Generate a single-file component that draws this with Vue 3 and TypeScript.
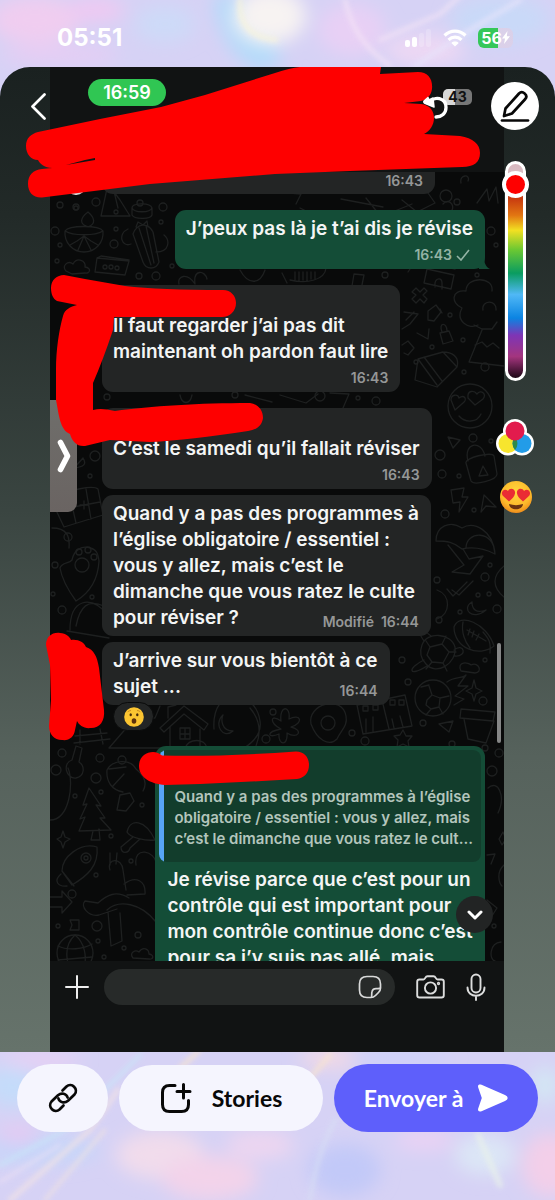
<script setup lang="ts">
import { ref } from 'vue'

interface Message {
  id: number
  side: 'in' | 'out'
  text: string
  lastLine?: string
  time: string
  edited?: boolean
  sent?: boolean
  named?: boolean
  reaction?: boolean
  quote?: string
  gap: 'wide' | 'tight' | 'far'
}

const messages: Message[] = [
  { id: 1, side: 'out', text: 'J’peux pas là je t’ai dis je révise', time: '16:43', sent: true, gap: 'wide' },
  { id: 2, side: 'in', text: 'Il faut regarder j’ai pas dit\nmaintenant oh pardon faut lire', time: '16:43', named: true, gap: 'wide' },
  { id: 3, side: 'in', text: 'C’est le samedi qu’il fallait réviser', time: '16:43', named: true, gap: 'wide' },
  {
    id: 4,
    side: 'in',
    text: 'Quand y a pas des programmes à\nl’église obligatoire / essentiel :\nvous y allez, mais c’est le\ndimanche que vous ratez le culte',
    lastLine: 'pour réviser ?',
    time: '16:44',
    edited: true,
    gap: 'tight',
  },
  { id: 5, side: 'in', text: 'J’arrive sur vous bientôt à ce', lastLine: 'sujet ...', time: '16:44', reaction: true, gap: 'tight' },
  {
    id: 6,
    side: 'out',
    text: 'Je révise parce que c’est pour un\ncontrôle qui est important pour\nmon contrôle continue donc c’est\npour sa j’y suis pas allé, mais',
    time: '',
    quote: 'Quand y a pas des programmes à l’église\nobligatoire / essentiel : vous y allez, mais\nc’est le dimanche que vous ratez le cult...',
    gap: 'far',
  },
]

const hue = ref(5)
const draft = ref('')

const dots: [number, number, number][] = [
  [60, 205, 3], [76, 208, 2], [96, 202, 4], [116, 212, 2], [140, 203, 3], [163, 207, 4], [55, 231, 4], [76, 207, 3],
  [116, 229, 2], [114, 244, 4], [60, 245, 2], [57, 261, 2], [139, 276, 3], [156, 276, 4], [172, 266, 2], [161, 222, 2],
  [491, 231, 4], [496, 245, 2], [477, 275, 2], [385, 275, 3], [450, 315, 2], [432, 347, 2], [463, 340, 2], [416, 362, 2],
  [464, 372, 2], [485, 367, 4], [107, 397, 3], [235, 395, 3], [320, 396, 5], [376, 401, 4], [358, 398, 2], [473, 438, 4],
  [491, 441, 2], [440, 455, 5], [442, 474, 4], [459, 476, 2], [90, 476, 2], [95, 456, 5], [445, 514, 4], [474, 510, 2],
  [68, 537, 4], [55, 565, 3], [92, 597, 2], [62, 610, 4], [53, 594, 2], [485, 577, 4], [490, 565, 2], [437, 580, 3],
  [478, 595, 2], [489, 594, 2], [497, 609, 4], [460, 612, 2], [439, 620, 3], [402, 660, 3], [408, 682, 3], [485, 660, 2],
  [483, 701, 4], [423, 723, 3], [352, 733, 3], [365, 741, 4], [273, 712, 3], [266, 739, 4], [452, 744, 3], [485, 748, 3],
  [499, 753, 4], [492, 771, 5], [62, 753, 4], [100, 758, 4], [122, 760, 4], [56, 770, 5], [96, 778, 5], [101, 792, 2],
  [142, 805, 2], [75, 796, 2], [111, 836, 2], [131, 861, 2], [96, 875, 2], [72, 894, 4], [97, 926, 5], [58, 926, 2],
  [98, 941, 2], [138, 935, 3], [124, 948, 2], [104, 957, 2], [494, 926, 2], [470, 217, 3], [457, 202, 3], [446, 196, 6],
]
</script>

<template>
  <main class="page">
    <svg class="holo" viewBox="0 0 555 1200" preserveAspectRatio="none" aria-hidden="true">
      <defs>
        <filter id="soft" x="-50%" y="-50%" width="200%" height="200%"><feGaussianBlur stdDeviation="9" /></filter>
        <filter id="streak" x="-50%" y="-50%" width="200%" height="200%"><feGaussianBlur stdDeviation="2.500" /></filter>
      </defs>
      <g filter="url(#soft)">
        <ellipse cx="35" cy="20" rx="45" ry="24" fill="#f0cdf0" />
        <ellipse cx="95" cy="10" rx="30" ry="12" fill="#efc9f2" />
        <ellipse cx="60" cy="55" rx="60" ry="10" fill="#e6cdf4" />
        <ellipse cx="165" cy="24" rx="30" ry="18" fill="#cddaf8" />
        <path d="M214-5C216 30 232 60 262 72L285 60 240-5Z" fill="#b2dbfa" />
        <ellipse cx="270" cy="16" rx="36" ry="28" fill="#f7f3f2" />
        <ellipse cx="352" cy="30" rx="34" ry="26" fill="#e8d0f5" />
        <ellipse cx="425" cy="50" rx="40" ry="16" fill="#edd8f4" />
        <ellipse cx="500" cy="20" rx="50" ry="24" fill="#c9d9f8" />
        <ellipse cx="12" cy="1085" rx="26" ry="22" fill="#c4dcfa" />
        <ellipse cx="40" cy="1060" rx="40" ry="10" fill="#e6d0f4" />
        <ellipse cx="40" cy="1150" rx="60" ry="14" fill="#c6d6f9" />
        <ellipse cx="18" cy="1135" rx="20" ry="8" fill="#e8c8f2" />
        <ellipse cx="160" cy="1155" rx="44" ry="24" fill="#f1dcec" />
        <ellipse cx="210" cy="1178" rx="48" ry="22" fill="#f3d3ea" />
        <ellipse cx="260" cy="1145" rx="34" ry="14" fill="#edd6f0" />
        <ellipse cx="345" cy="1170" rx="36" ry="26" fill="#c2c9f8" />
        <ellipse cx="425" cy="1140" rx="30" ry="10" fill="#ebd2f4" />
        <ellipse cx="485" cy="1155" rx="30" ry="20" fill="#dce6f6" />
        <ellipse cx="550" cy="1165" rx="28" ry="32" fill="#f3cfe9" />
        <ellipse cx="330" cy="1058" rx="30" ry="10" fill="#f3d9e4" />
        <ellipse cx="400" cy="1058" rx="50" ry="9" fill="#cdd2f9" />
        <ellipse cx="545" cy="1085" rx="14" ry="18" fill="#d3e7f4" />
      </g>
      <g fill="none" stroke-linecap="round" filter="url(#streak)" opacity=".7">
        <path d="M0 1165 65 1130 140 1055" stroke="#c8e6f8" stroke-width="4" />
        <path d="M10 1200 90 1130 118 1090" stroke="#f3e3e4" stroke-width="5" />
        <path d="M45 1200 105 1130" stroke="#f6e6dc" stroke-width="3" />
        <path d="M0 1182 60 1145" stroke="#efe2f4" stroke-width="3" />
        <path d="M180 1068 198 1052M310 1078 330 1055" stroke="#f9e5cf" stroke-width="5" />
        <path d="M310 1200C316 1160 325 1140 335 1120" stroke="#d8dff4" stroke-width="4" />
        <path d="M500 1185 478 1135" stroke="#e9f2ea" stroke-width="6" />
        <path d="M345 0C352 30 365 48 390 66M380 40 440 14 460-4" stroke="#f6e6f6" stroke-width="4" />
        <path d="M415 66 470 30 520 0" stroke="#e7e4fb" stroke-width="5" />
        <path d="M240 0C238 25 252 38 276 40" stroke="#fbf5d8" stroke-width="5" />
      </g>
    </svg>

    <header class="status">
      <span class="clock">05:51</span>
      <span class="indicators">
        <svg class="signal" viewBox="0 0 28 20" aria-label="Réseau">
          <rect x="1" y="12" width="5" height="7" rx="2" fill="#fff" />
          <rect x="8" y="9" width="5" height="10" rx="2" fill="#fff" />
          <rect x="15" y="5" width="5" height="14" rx="2" fill="#fff" opacity=".2" />
          <rect x="22" y="1" width="5" height="18" rx="2" fill="#fff" opacity=".2" />
        </svg>
        <svg class="wifi" viewBox="0 0 24 18" aria-label="Wi-Fi">
          <g fill="none" stroke="#fff" stroke-width="3.200">
            <path d="M1.500 6.500C7.500.6 16.500.6 22.500 6.500" />
            <path d="M5.500 10.800C9.300 7.200 14.700 7.200 18.500 10.800" />
          </g>
          <path d="M12 17.600 8.300 13.900C10.200 12.100 13.800 12.100 15.700 13.900Z" fill="#fff" />
        </svg>
        <span class="battery">
          <b>56</b>
          <svg viewBox="0 0 8 13"><path d="M5.500 0 0 7.500h3L2 13 8 5.200H4.800Z" fill="#fff" /></svg>
        </span>
      </span>
    </header>

    <section class="editor">
      <div class="shot">
        <div class="shot-head">
          <span class="pill">16:59</span>
          <span class="old-battery">43</span>
        </div>

        <div class="chat">
          <svg class="doodles" viewBox="50 172 454 789" preserveAspectRatio="xMinYMin slice" aria-hidden="true">
            <g fill="none" stroke="#1e2020" stroke-width="1.300" stroke-linejoin="round" stroke-linecap="round">
              <circle v-for="(d, i) in dots" :key="i" :cx="d[0]" :cy="d[1]" :r="d[2]" />
              <path d="M101 216 108 184 120 200 130 216ZM112 183l6 25M132 208c0-5 18-6 20 0v7c-2 5-18 4-20 0Zm0 0c2 5 18 5 20 0" />
              <path d="M65 231c4-6 34-6 38 0 1 12-8 21-19 21S64 243 65 231Zm0 0c8 5 30 5 38 0M88 227c-9-3-8-9 0-15 7 6 8 12 0 15ZM70 245l7-4 7-5 7 5 7 4M78 250l6-14 7 14" />
              <path d="M133 234c4-11 15-12 20-2l6 30c-3 8-13 8-16 0ZM139 228l12 37M146 226l8 37M131 244c-9 4-14-10-3-15M156 252c14 0 14-12 8-17M136 227l2-5 5 3 4-4 1 6" />
              <path d="M66 271c-5-5 2-11 7-7 4-7 13-4 12 3 7 1 5 7 0 6l-13 1ZM97 258l32 3-4 14-30-3ZM97 258l4-2 28 4" />
              <circle cx="105" cy="267" r="2" /><circle cx="111" cy="267" r="2" /><circle cx="117" cy="268" r="2" />
              <path d="M195 284c-8-12-18-8-16 0m16 0c-2-15 10-14 12-5M240 270c8 15 20 15 25 0M282 273l5 10M290 280c17 4 35 0 36-12M295 272v8m4-8v9m4-9v8m4-8v9m4-9v7m4-7v7M352 286l2-12 10 1-2 10M408 272l4-6M424 283l3-14 27 6-3 14Zm7-15 2-4 22 5M442 289v-6c0-6-6-5-7 0v4" />
              <path d="m412 292 4-4 4 4 4-4 3 3-4 4 4 4-3 4-4-4-4 4-4-4 4-4ZM404 312l14 2-8 10-8 5M406 320l8-8M428 311l8-6 5 7-7 9-6-1ZM442 313l-2-4M417 333l11 6 1-10M402 345l6-4 6 7-6 7-4-2M440 333l9-2 4 10-10 3ZM442 332c-4-10 5-10 5-1" />
              <path d="M462 308c-12-5-10-19 4-17 0-15 28-15 26 0M462 308c-7 13 7 22 16 17M474 325l8 4h10l5-7M483 310c-2-10 14-11 13 0M482 330l-13 32 35 4M475 345l7-3 5 5 6-4 6 5" />
              <path d="m415 380 3-21 25-7 14 15-20 20-22-7Zm3-21 19 26M424 357l18 24M443 352c8 0 17 4 14 15M300 208l16 8M266 191l35 3-5 10M341 199l42 8M366 198l12 15M402 200l15 12 18-9-7-10M412 204l-27 11M477 203l10-14 2 12 7-14 2 16M443 204c7-8 15 5 5 10M461 183c-2-9 10-9 7-2" />
              <circle cx="470" cy="406" r="22" />
              <path d="M451 400c0-6 7-6 8-2 5-4 9 1 4 5l-8 7ZM468 398c-1-8 6-8 9-4 4-5 10 0 6 5l-8 6ZM459 416c6 7 18 7 22-2M448 437l12 3-7 8Zm20 24c-5-18 13-22 17-5" />
              <path d="M466 463c-2-5 26-12 28-7l3 18c0 6-23 12-26 7ZM479 476l4-10 5 9ZM451 490l13-2-2 9 6 0-9 15 1-10-7 1ZM484 495l12 12-10-1-5 6Z" />
              <path d="M62 496c5-6 31-11 36-7l5 26-39 12-9-19ZM58 510l42-8M69 492l7 31M86 489l5 30M52 528c15 0 18 8 17 20M80 505h8m-4-4v8M83 458l-9 10c10-1 13-4 9-10M90 548c-8-3-16 2-18 12-3 4-10 2-12 8 2 12 8 22 16 33 15-9 22-22 23-40-1-8-3-12-9-13Z" />
              <circle cx="82" cy="565" r="7" /><circle cx="79" cy="552" r="3" /><circle cx="88" cy="550" r="3" /><circle cx="94" cy="557" r="3" />
              <path d="M70 630c0-31 20-36 38-15M67 631l42 7M76 626c4-20 12-27 28-20M245 395l27 7M330 393l19 1-6 14M180 395c2 10 10 10 12 0M280 395l26 8 12-9" />
              <path d="M436 541c0-15 14-21 26-13 12-7 31 2 33 26-12-6-24-7-33-5-8-7-15-8-26-8ZM466 548c0-17 28-19 29 6M448 545l16 20-12 7 18 2 13-18-14 3-6-10M447 589l6 7 14-14m-15 8 7 5 14-14M472 602c-11 6 0 20 14 8-10 4-14-1-14-8M504 566c-12 10-12 21 0 31M437 590c14 5 14 24 0 29" />
              <path d="M454 627c5-15 33-4 40 19-15 12-40 2-40-19ZM463 622c-2 10 2 20 7 26M483 632c6 7 8 10 7 21M467 630l19 11M470 629l-2 6m6-4-2 6m7-3-3 6" />
              <path d="M422 645c5-14 29-12 33 2 2 17-19 29-29 17-5-5-7-11-4-19Zm8 2 12-3 7 8-6 11-11-1-5-7ZM430 647l-4-6m16 3 4-8m3 16 7 0m-13 11 4 8m-15-9-6 7M424 641c-9-13-3-13 7-5M454 650c10-8 14 7 1 6M424 660c-17 8-16 18 3 6" />
              <circle cx="433" cy="698" r="18" />
              <path d="m427 700 5-5 8 3-1 9-8 2-5-4ZM432 695l-3-9m11 12 9-2m-10 11 4 7m-12-5-5 6M421 687l8-2M447 682c8-6 15-3 19-7l-8 11h10l-13 10 9 3-10 6M466 691l6-3 2-8 2 8 6 3-6 3-2 7-2-7ZM461 671c-5-10 8-9 10-6 8-4 12 8 4 8ZM461 709l34 3-2 9-33-3ZM464 719l4 20 18 4 8-22M439 724l14-3-4 11Z" />
              <path d="m357 705 48-10 7 31-49 8ZM382 700l7 29M363 706h5v5h-5Zm10-1h5v5h-5Zm-7 14v13m7-15v14M390 700h5v5h-5Zm9 0h5v5h-5ZM392 719l2 9m6-12 3 11M311 724c-4-20 31-30 35-8 2 10-5 14-9 23-8 8-20 1-26-15ZM403 730l3 6 6 0-4 5 1 6-6-3-6 3 1-7-4-4 6-1Z" /><circle cx="328" cy="723" r="7" />
              <path d="M160 728l24-22 24 18-4 6-20-16-20 18ZM170 727v22h30v-20M180 728h10v11h-10Zm5 0v11m-5-5h10M168 718v-11l8-2M109 748l26-30 20 0 5-12M109 748h76c4-10 20-10 22 0M214 729c-3-45 42-40 46-8 2 14-8 22-16 27M223 715c-10 9 0 25 10 16-12 0-12-12-10-16M250 708c12 14 10 28 6 38" />
              <path d="M281 729c-12-6-11-16 0-8-2-16 10-16 8-2 12-6 15 4 2 8 13 3 7 13-4 6 1 14-9 12-8 1-11 5-14-2 2-5ZM75 736l32-3M74 743l36-4M80 730v14m20-15 3 15" />
              <path d="M76 746l6 2-3 14c6 4 6 14-3 16-10 1-14-15-4-18ZM107 770c5-10 23-12 29-1 10 8 11 15 7 22M107 770c-1 12 5 20 16 22M113 786l11-12m-15-5 17-2M120 795l10-2 4 8-8 10-9-1ZM50 820c20 0 24-38 18-52" />
              <path d="M89 788l12 18-5-1 9 13-5 0 11 12-32 1 6-14-5 2 7-15-4 1ZM93 831l-2 9 9 0-1-11M57 839l4-2 2-6 2 6 5 2-5 3-2 6-2-6ZM127 832c3-14 18-13 28 8-9 1-25-2-28-8ZM133 837l-12 10c0 8 8 6 9 1l10-9" />
              <path d="M62 871c0-14 18-29 35-24 2 19-10 29-25 38ZM62 871l12 15M61 874c-8 7-3 13 6 12" /><circle cx="86" cy="858" r="5" /><circle cx="86" cy="858" r="2" />
              <path d="M136 865c-3-20 20-14 20-1M110 870c-4-12 12-13 13 0l3 20M124 884c12-9 22-3 21 10l-18 1M110 865v-12m6 11 1-11M129 898c-13-8-22-3-31 5l-13-2c-5 5 3 16 14 14l18-6M107 910c12-11 34-7 49 12M108 912l3 34 11-5-2-28M50 897h12v-6l10 11-10 11v-6H50" />
              <path d="M70 920h9v10h-9l2-5ZM133 958c-4-5 2-9 6-6 4-6 10-3 10 2 6 1 4 6 0 5Z" /><circle cx="75" cy="953" r="18" /><path d="M58 946c10 5 26 3 34-2M58 960l34-3M75 935c-11 10-9 24-5 35M75 935c10 8 12 22 9 33M488 788c10-9 18 8 10 25M499 839l4-7 3 7-4 6ZM487 855l8-1-4 10M504 865c-8 7-5 18-2 21M487 900l10 8-7 11M501 942c-12 1-12 18-6 19" />
            </g>
          </svg>

          <span class="avatar-edge"></span>

          <div class="thread">
            <article class="bubble in cut-off"><span class="meta">16:43</span></article>
            <article
              v-for="m in messages"
              :key="m.id"
              class="bubble"
              :class="[m.side, m.gap, { named: m.named, quoting: m.quote }]"
            >
              <blockquote v-if="m.quote">{{ m.quote }}</blockquote>
              <p>{{ m.text }}</p>
              <div v-if="m.time" class="closing">
                <p v-if="m.lastLine">{{ m.lastLine }}</p>
                <span class="meta">
                  <span v-if="m.edited">Modifié</span>
                  <time>{{ m.time }}</time>
                  <svg v-if="m.sent" class="check" viewBox="0 0 14 12"><path d="m1 7 4 4 8-10" fill="none" stroke="currentColor" stroke-width="1.600" /></svg>
                </span>
              </div>
              <svg v-if="m.sent" class="tail" viewBox="0 0 12 12"><path d="M0 0c0 0 4 0 5 0 0 6 2 10 6 12H0Z" fill="#144d37" /></svg>
              <span v-if="m.reaction" class="reaction">
                <svg viewBox="0 0 20 20" aria-label="Surpris">
                  <circle cx="10" cy="10" r="9.800" fill="#fcc531" />
                  <path d="M3.500 5.200C4.500 3.900 5.800 3.500 7 3.600M16.500 5.200C15.500 3.900 14.200 3.500 13 3.600" stroke="#c98a20" fill="none" />
                  <ellipse cx="6.700" cy="7.800" rx="1.200" ry="1.500" fill="#472a0b" />
                  <ellipse cx="13.300" cy="7.800" rx="1.200" ry="1.500" fill="#472a0b" />
                  <ellipse cx="10" cy="14" rx="2.300" ry="2.800" fill="#5d310b" />
                </svg>
              </span>
            </article>
          </div>

          <button class="side-tab" aria-label="Ouvrir">
            <svg viewBox="0 0 14 34"><path d="M3.500 3.500 10.500 17 3.500 30.500" fill="none" stroke="#fff" stroke-width="5.600" stroke-linecap="round" stroke-linejoin="round" /></svg>
          </button>
          <span class="scrollbar"></span>
          <button class="jump" aria-label="Aller en bas">
            <svg viewBox="0 0 16 10"><path d="m2 2 6 6 6-6" fill="none" stroke="#fff" stroke-width="3" stroke-linecap="round" stroke-linejoin="round" /></svg>
          </button>
        </div>

        <div class="composer">
          <button aria-label="Ajouter">
            <svg width="24" height="24" viewBox="0 0 24 24"><path d="M12 1v22M1 12h22" stroke="#eee" stroke-width="2" stroke-linecap="round" /></svg>
          </button>
          <label class="field">
            <input v-model="draft" type="text" aria-label="Message" />
            <svg width="24" height="24" viewBox="0 0 24 24" fill="none" stroke="#d8d9d9" stroke-width="1.700" stroke-linejoin="round">
              <path d="M13 22.500H9c-5 0-7.500-2.500-7.500-7.500V9C1.500 4 4 1.500 9 1.500h6C20 1.500 22.500 4 22.500 9v4c0 2-1 3.500-2 4.500l-3 3c-1 1-2.500 2-4.500 2Z" />
              <path d="M13.500 22c.5-2 0-4 .5-5.500.6-2 2-2.800 4-2.800 1.800 0 3 0 4-.7" />
            </svg>
          </label>
          <button class="camera" aria-label="Appareil photo">
            <svg width="29" height="24" viewBox="0 0 29 24" fill="none" stroke="#dcdddd" stroke-width="1.900" stroke-linejoin="round">
              <path d="M3.500 4.500h4c1 0 1.300-.6 1.800-1.600.6-1.200 1-1.700 2.200-1.700h6c1.200 0 1.600.5 2.200 1.700.5 1 .8 1.600 1.800 1.600h4c1.500 0 2.300.8 2.300 2.300v13.400c0 1.500-.8 2.300-2.300 2.300h-22C2 22.500 1.200 21.700 1.200 20.200V6.800C1.200 5.300 2 4.500 3.500 4.500Z" />
              <circle cx="14.500" cy="13" r="5.600" />
              <circle cx="22.500" cy="8.500" r=".7" />
            </svg>
          </button>
          <button aria-label="Message vocal">
            <svg width="20" height="28" viewBox="0 0 20 28" fill="none" stroke="#dcdddd" stroke-width="1.900" stroke-linecap="round">
              <rect x="5.500" y="1.500" width="9" height="18" rx="4.500" />
              <path d="M1.500 14.500c0 11 17 11 17 0M10 23v4" />
            </svg>
          </button>
        </div>
      </div>

      <svg class="ink" viewBox="0 67 555 985" aria-hidden="true">
        <g fill="#fe0000">
          <path fill-rule="evenodd" d="M26 146C26 138 31 134 38 132L100 119 161 107 205 95 275 73Q290 68 300 67H381L380 74 418 72C428 72 433 79 432 89 431 95 428 99 421 101L404 103 421 104C430 105 434 111 434 118 434 125 430 131 424 134L460 136C473 138 480 144 480 153 480 162 474 167 462 167L350 171 275 174 150 184 42 197.500C33 198 28 192 28 184 28 175 33 170 42 169L52 168C45 168 40 164 38 160 31 160 26 154 26 146ZM66 165 95 160 95 158 85 160Z" />
          <path d="M51 288C51 280 57 275 64 275L85 279 125 286Q160 290 223 290C231 290 236 296 236 303 236 311 230 317 222 317H114L113 330Q103 360 93 383L93 410C100 408 106 409 115 411 150 406 200 403 250 403 258 404 263 410 263 418 262 426 256 430 248 431Q190 440 150 442L110 440 85 446C77 447 72 441 70 434 60 430 59 415 56 400L56 370C56 350 59 330 63 316 65 309 70 307 77 305L57 301C53 299 51 294 51 288Z" />
          <path d="M46 645C46 637 52 632 60 633 66 633 70 637 71 640 78 639 84 642 86 647 94 650 97 656 99 668L104 710C105 721 100 728 91 728 84 729 79 725 77 721L75 730C74 737 69 741 62 740 54 740 49 734 49 726L51 700 50 665Z" />
          <path d="M139 766C139 757 146 752 153 752Q158 752 162 755.500 220 757 296 751.500C304 751.500 309 757 309 765 309 773 304 778 297 779L262 781 200 784 165 785C150 784 139 777 139 766Z" />
        </g>
      </svg>

      <button class="back" aria-label="Retour">
        <svg width="16" height="28" viewBox="0 0 16 28"><path d="M14.500 2.500 2.500 14.500 14.500 26.500" fill="none" stroke="#fff" stroke-width="2.700" stroke-linecap="round" stroke-linejoin="round" /></svg>
      </button>
      <button class="undo" aria-label="Annuler">
        <svg width="28" height="28" viewBox="0 0 28 28">
          <path d="M8 9.500C12 2.500 24 4.500 24 14.500c0 6-4.500 9.500-10 9.500" fill="none" stroke="#fff" stroke-width="3.300" stroke-linecap="round" />
          <path d="M6 4.500 2.300 7.800c-1 1-.4 2 .6 2.600L12 14l-1-9-4 2Z" fill="#fff" stroke="#fff" stroke-width="1.500" stroke-linejoin="round" />
        </svg>
      </button>
      <aside class="tools">
        <button class="pen" aria-label="Dessiner">
          <svg width="30" height="32" viewBox="0 0 30 32" fill="none" stroke="#080808" stroke-width="2.700" stroke-linecap="round" stroke-linejoin="round">
            <path d="M4 26 5.500 18.500 19 3.500c3.500-3.500 9.500 1.500 6.300 5.500L12 23.500Z" />
            <path d="M2 30.500h26" />
          </svg>
        </button>
        <div class="hues">
          <input v-model="hue" type="range" min="0" max="100" aria-label="Couleur" />
        </div>
        <button class="palette" aria-label="Palette">
          <svg width="38" height="37" viewBox="0 0 38 37">
            <g fill="#fff"><circle cx="19" cy="12" r="12" /><circle cx="12" cy="24.500" r="12" /><circle cx="26" cy="24.500" r="12" /></g>
            <circle cx="12" cy="24.500" r="9.500" fill="#f7e52e" />
            <circle cx="26" cy="24.500" r="9.500" fill="#229ce8" />
            <path d="M19 18.100a9.500 9.500 0 0 1 0 12.800 9.500 9.500 0 0 1 0-12.800Z" fill="#2f8a49" />
            <circle cx="19" cy="12" r="9.500" fill="#e21b4d" />
          </svg>
        </button>
        <button class="emoji" aria-label="Émojis">
          <svg width="34" height="34" viewBox="0 0 34 34">
            <defs><radialGradient id="face" cx=".5" cy=".35" r=".65"><stop offset="0" stop-color="#ffd83d" /><stop offset=".7" stop-color="#fdb92b" /><stop offset="1" stop-color="#ee8c1c" /></radialGradient></defs>
            <circle cx="17" cy="17" r="16" fill="url(#face)" />
            <path d="M10 21.500 3.800 15.800C1 12 5.500 7.500 9 11c1.500-4 8-2.500 7 2.500-.5 3-3 5.500-6 8Z" fill="#ea2c34" />
            <path d="M24 21.500 30.200 15.800C33 12 28.500 7.500 25 11c-1.500-4-8-2.500-7 2.500.5 3 3 5.500 6 8Z" fill="#ea2c34" />
            <path d="M10 24c4.500 1.500 9.500 1.500 14 0-.5 7-13.500 7-14 0Z" fill="#6b3410" />
          </svg>
        </button>
      </aside>
    </section>

    <footer class="actions">
      <button class="link" aria-label="Copier le lien">
        <svg width="30" height="30" viewBox="0 0 30 30" fill="none" stroke="#080808" stroke-width="2.700" stroke-linecap="round" stroke-linejoin="round">
          <path d="M14.500 7.500 18.500 3.500c5-4.500 12.500 2.500 8 8l-6.500 6.300c-3.500 3-8.500 1.700-9.600-2.300" />
          <path d="M15.500 22.500 11.500 26.500c-5 4.500-12.500-2.500-8-8L10 12.200c3.500-3 8.500-1.700 9.600 2.300" />
        </svg>
      </button>
      <button class="stories">
        <svg width="32" height="32" viewBox="0 0 32 32" fill="none" stroke="#080808" stroke-width="3" stroke-linecap="round">
          <path d="M15 3.500H9.500c-4.500 0-7 2.500-7 7v12c0 4.500 2.500 7 7 7h12c4.500 0 7-2.500 7-7V18.500" />
          <path d="M23.500 2.500v13.500M17 9.500h13" />
        </svg>
        Stories
      </button>
      <button class="send">
        Envoyer à
        <svg width="31" height="28" viewBox="0 0 31 28"><path d="M1.200 3.500C.5 1 2 0 4.500.8L28 11c3.500 1.500 3.500 4.500 0 6L4.500 27.200C2 28 .5 27 1.200 24.500L4.800 14Z" fill="#fff" /></svg>
      </button>
    </footer>
  </main>
</template>

<style>
html,
body {
  margin: 0;
}
</style>

<style scoped>
* {
  box-sizing: border-box;
}
button {
  border: 0;
  padding: 0;
  background: none;
  font: inherit;
  color: inherit;
  display: flex;
  align-items: center;
  justify-content: center;
}
svg {
  display: block;
}
.page {
  position: relative;
  display: flex;
  flex-direction: column;
  height: 100vh;
  overflow: hidden;
  font-family: Inter, 'Noto Sans', sans-serif;
  background: #d6d2f5;
}
.holo {
  position: absolute;
  inset: 0;
  width: 100%;
  height: 100%;
}
.status {
  position: relative;
  display: flex;
  flex: none;
  align-items: center;
  justify-content: space-between;
  height: 67px;
  padding: 8px 42px 0 57px;
  color: #fff;
}
.clock {
  font-size: 24px;
  font-weight: 700;
}
.indicators {
  display: flex;
  align-items: center;
  gap: 11px;
}
.signal {
  width: 28px;
  height: 20px;
}
.wifi {
  width: 24px;
  height: 18px;
}
.battery {
  display: flex;
  align-items: center;
  justify-content: center;
  width: 35px;
  height: 20px;
  border-radius: 6px;
  background: linear-gradient(90deg, #35c759 57%, rgba(220, 208, 232, 0.9) 57%);
  font-size: 16px;
}
.battery svg {
  width: 8px;
  height: 13px;
}
.editor {
  position: relative;
  display: flex;
  flex: 1;
  min-height: 0;
  padding: 0 51px 0 50px;
  overflow: hidden;
  border-radius: 30px 30px 0 0;
  background: linear-gradient(#1a2120, #222a28 15%, #3a4541 45%, #56625c 70%, #66736b);
}
.shot {
  display: flex;
  flex: 1;
  flex-direction: column;
  min-width: 0;
  background: #111313;
}
.shot-head {
  display: flex;
  flex: none;
  align-items: flex-start;
  justify-content: space-between;
  height: 105px;
  padding: 12px 32px 0 38px;
}
.pill {
  width: 78px;
  border-radius: 14px;
  background: #30c653;
  color: #fff;
  font-size: 18px;
  font-weight: 600;
  line-height: 27px;
  text-align: center;
}
.old-battery {
  width: 29px;
  margin-top: 10px;
  border-radius: 5px;
  background: linear-gradient(90deg, #d8d8d8 43%, #777 43%);
  color: #111;
  font-size: 14px;
  font-weight: 700;
  line-height: 16px;
  text-align: center;
}
.chat {
  position: relative;
  flex: 1;
  min-height: 0;
  overflow: hidden;
  background: #090a0a;
}
.doodles {
  position: absolute;
  inset: 0;
  width: 100%;
  height: 100%;
}
.avatar-edge {
  position: absolute;
  top: 6px;
  left: 17px;
  width: 18px;
  height: 17px;
  border-radius: 9px;
  background: #d5d5d5;
}
.thread {
  position: relative;
  display: flex;
  flex-direction: column;
  padding: 0 19px 0 52px;
}
.bubble {
  position: relative;
  display: flex;
  flex-direction: column;
  width: fit-content;
  padding: 6px 12px 5px 11px;
  border-radius: 11px;
  background: #232525;
  color: #f4f5f5;
}
.bubble p {
  margin: 0;
  font-size: 19px;
  font-weight: 600;
  line-height: 26px;
  white-space: pre;
}
.bubble.out {
  align-self: flex-end;
  background: #144d37;
}
.wide {
  margin-top: 16px;
}
.tight {
  margin-top: 6px;
}
.far {
  margin-top: 41px;
}
.named {
  padding-top: 28px;
}
.cut-off {
  width: 333px;
  height: 22px;
  padding: 0 12px;
  border-radius: 0 0 11px 11px;
}
.closing {
  display: flex;
  align-items: flex-end;
  justify-content: space-between;
}
.meta {
  display: flex;
  align-items: center;
  gap: 7px;
  margin-top: 4px;
  margin-left: auto;
  color: #959797;
  font-size: 14px;
  font-weight: 600;
  line-height: 18px;
}
.cut-off .meta {
  margin-top: 0;
}
.out .meta {
  gap: 4px;
  padding-right: 3px;
  color: #93b3a5;
}
.check {
  width: 14px;
  height: 12px;
}
.tail {
  position: absolute;
  right: -6px;
  bottom: 0;
  width: 12px;
  height: 12px;
}
.reaction {
  position: absolute;
  top: 60px;
  left: 11px;
  display: flex;
  align-items: center;
  justify-content: center;
  width: 41px;
  height: 29px;
  border: 1px solid #0a0b0b;
  border-radius: 15px;
  background: #232525;
}
.reaction svg {
  width: 20px;
  height: 20px;
}
.quoting {
  padding: 4px 4px 0;
  border-radius: 11px 11px 0 0;
}
.quoting p {
  padding: 5px 8px 0;
}
blockquote {
  margin: 0;
  padding: 36px 8px 13px 15px;
  border-radius: 8px;
  background: linear-gradient(90deg, #57a4f5 5px, #123d2c 5px);
  color: #b3c5bc;
  font-size: 15px;
  font-weight: 600;
  line-height: 21px;
  white-space: pre;
}
.side-tab {
  position: absolute;
  top: 228px;
  left: 0;
  width: 27px;
  height: 112px;
  border-radius: 0 9px 9px 0;
  background: linear-gradient(#6f6e6b, #6a6462);
}
.side-tab svg {
  width: 14px;
  height: 34px;
}
.scrollbar {
  position: absolute;
  top: 471px;
  right: 3px;
  width: 4px;
  height: 100px;
  border-radius: 2px;
  background: #858686;
}
.jump {
  position: absolute;
  right: 11px;
  bottom: 28px;
  width: 37px;
  height: 37px;
  border-radius: 50%;
  background: #222424;
}
.jump svg {
  width: 16px;
  height: 10px;
}
.composer {
  display: flex;
  flex: none;
  align-items: center;
  gap: 15px;
  height: 91px;
  padding: 0 18px 40px 15px;
  background: #111313;
}
.field {
  display: flex;
  flex: 1;
  align-items: center;
  height: 36px;
  min-width: 0;
  padding: 0 13px 0 14px;
  border-radius: 18px;
  background: #272a29;
}
.field input {
  flex: 1;
  min-width: 0;
  border: 0;
  outline: 0;
  background: none;
  color: #fff;
  font: inherit;
}
.camera {
  margin: 0 6px;
}
.ink {
  position: absolute;
  top: 0;
  left: 0;
  width: 100%;
  pointer-events: none;
}
.back {
  position: absolute;
  top: 25px;
  left: 30px;
}
.undo {
  position: absolute;
  top: 26px;
  right: 105px;
}
.tools {
  position: absolute;
  top: 15px;
  right: 16px;
  display: flex;
  flex-direction: column;
  align-items: center;
  width: 48px;
}
.pen {
  width: 48px;
  height: 48px;
  border-radius: 50%;
  background: #fff;
}
.hues {
  display: flex;
  justify-content: center;
  width: 21px;
  height: 220px;
  margin: 31px 0 38px;
  border: 3px solid #fff;
  border-radius: 11px;
  background: linear-gradient(#d9b8c0, #d8c0c4 6%, #c83a10 16%, #e27612 24%, #f2e022 31%, #6cc832 40%, #0a9c60 51%, #50b8f6 61%, #0b84e2 72%, #7e35b6 80%, #a4357e 90%, #1c0614);
}
.hues input {
  flex: none;
  width: 27px;
  height: 220px;
  margin: -3px 0;
  appearance: none;
  background: none;
  writing-mode: vertical-lr;
}
.hues input::-webkit-slider-thumb {
  width: 27px;
  height: 27px;
  appearance: none;
  border: 4px solid #fff;
  border-radius: 50%;
  background: #fe0000;
}
.emoji {
  margin: 24px 0 0 2px;
}
.actions {
  position: relative;
  display: flex;
  flex: none;
  align-items: center;
  gap: 11px;
  height: 148px;
  padding: 0 17px 57px;
  color: #080808;
  font-family: Lato, 'Open Sans', sans-serif;
  font-size: 23px;
  font-weight: 700;
}
.actions button {
  height: 68px;
  border-radius: 34px;
  background: #f5f5fe;
}
.link {
  flex: 91;
}
.actions .stories {
  flex: 204;
  gap: 20px;
  height: 66px;
}
.actions .send {
  flex: 204;
  gap: 14px;
  background: #5e5ffb;
  color: #fff;
}
</style>
